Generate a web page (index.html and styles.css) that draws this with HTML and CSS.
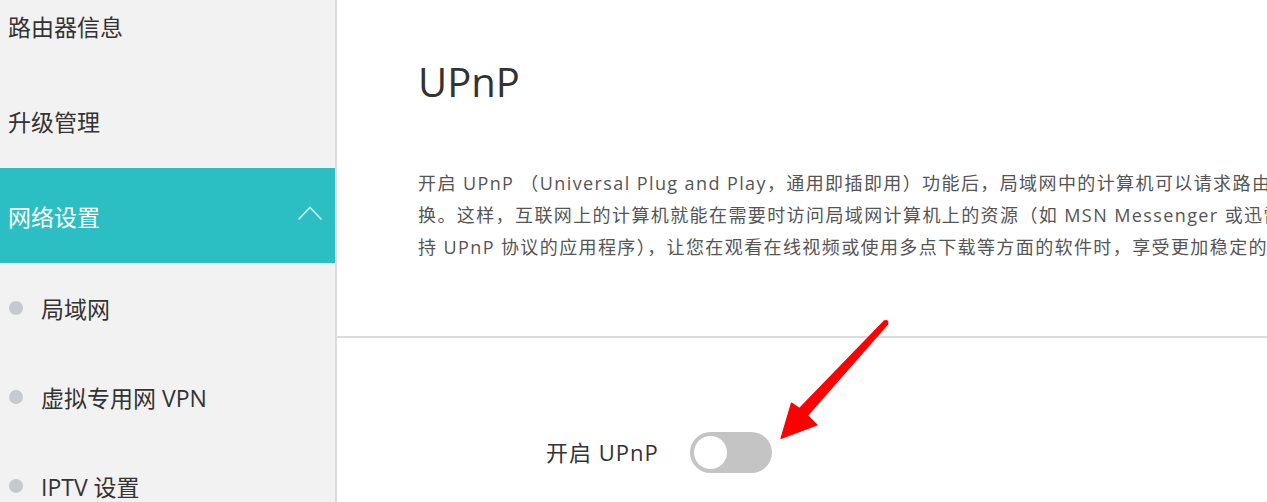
FILE: index.html
```html
<!DOCTYPE html>
<html lang="zh-CN">
<head>
<meta charset="utf-8">
<title>UPnP</title>
<link rel="stylesheet" href="styles.css">
</head>
<body>
<div class="app">
  <aside class="sidebar">
    <nav class="nav">
      <div class="nav-item">路由器信息</div>
      <div class="nav-item">升级管理</div>
      <div class="nav-item active">
        <span>网络设置</span>
        <svg class="chevron" width="26" height="16" viewBox="0 0 26 16"><path d="M1.5 14.5 L13 2.5 L24.5 14.5" fill="none" stroke="#ffffff" stroke-opacity="0.75" stroke-width="1.6"/></svg>
      </div>
      <div class="sub-list">
        <div class="sub-item"><span class="dot"></span><span>局域网</span></div>
        <div class="sub-item"><span class="dot"></span><span>虚拟专用网 VPN</span></div>
        <div class="sub-item"><span class="dot"></span><span>IPTV 设置</span></div>
      </div>
    </nav>
  </aside>
  <main class="main">
    <section class="intro">
      <h1 class="title">UPnP</h1>
      <div class="desc-clip">
        <p class="desc">
          <span class="line">开启 UPnP （Universal Plug and Play，通用即插即用）功能后，局域网中的计算机可以请求路由器自动进行端口转</span>
          <span class="line">换。这样，互联网上的计算机就能在需要时访问局域网计算机上的资源（如 MSN Messenger 或迅雷、BT、PPLive 等支</span>
          <span class="line">持 UPnP 协议的应用程序），让您在观看在线视频或使用多点下载等方面的软件时，享受更加稳定的网络。</span>
        </p>
      </div>
    </section>
    <section class="form">
      <div class="form-row">
        <span class="label">开启 UPnP</span>
        <span class="toggle"><span class="knob"></span></span>
      </div>
    </section>
  </main>
</div>
<svg class="arrow" width="1267" height="502" viewBox="0 0 1267 502">
  <polygon points="884.3,320.8 887.7,324.2 807.5,415.5 817,425 781,438.5 791.5,403 799.5,408.5" fill="#ff0000" stroke="#ff0000" stroke-width="1.2" stroke-linejoin="round"/>
  <circle cx="886" cy="322.5" r="2.4" fill="#ff0000"/>
</svg>
</body>
</html>
```

FILE: styles.css
```css
html, body {
  margin: 0;
  padding: 0;
  width: 1267px;
  height: 502px;
  overflow: hidden;
  background: #ffffff;
  font-family: "Open Sans", "Noto Sans CJK SC", sans-serif;
}

.app {
  display: flex;
  height: 502px;
}

.sidebar {
  width: 335px;
  flex: none;
  background: #f2f2f2;
  border-right: 2px solid #dcdcdc;
  overflow: hidden;
}

.nav {
  margin-top: -22px;
  display: flex;
  flex-direction: column;
}

.nav-item {
  height: 95px;
  display: flex;
  align-items: center;
  justify-content: space-between;
  padding: 0 12px 0 8px;
  font-size: 23px;
  color: #333333;
}

.nav-item.active {
  background: #2bbfc4;
  color: #ffffff;
}

.chevron {
  display: block;
  margin-top: -6px;
}

.sub-list {
  display: flex;
  flex-direction: column;
}

.sub-item {
  height: 89px;
  display: flex;
  align-items: center;
  gap: 18px;
  padding-left: 9px;
  font-size: 23px;
  color: #333333;
}

.dot {
  width: 14px;
  height: 14px;
  border-radius: 50%;
  background: #c6c9cd;
  flex: none;
}

.main {
  flex: 1;
  min-width: 0;
  display: flex;
  flex-direction: column;
  overflow: hidden;
}

.intro {
  height: 338px;
  box-sizing: border-box;
  border-bottom: 2px solid #dcdcdc;
  padding: 57px 0 0 81px;
}

.title {
  margin: 0;
  font-size: 40px;
  font-weight: 400;
  line-height: 50px;
  color: #333333;
}

.desc-clip {
  overflow: hidden;
  margin-top: 60px;
}

.desc {
  margin: 0;
  font-size: 18px;
  letter-spacing: 1.4px;
  line-height: 32px;
  color: #555555;
}

.line {
  display: block;
  white-space: nowrap;
}

.form {
  padding: 94px 0 0 209px;
}

.form-row {
  display: flex;
  align-items: center;
  gap: 31px;
}

.label {
  font-size: 22px;
  line-height: 41px;
  color: #333333;
  letter-spacing: 1px;
}

.toggle {
  width: 82px;
  height: 41px;
  border-radius: 21px;
  background: #c4c4c4;
  box-sizing: border-box;
  padding: 4px;
  display: flex;
  align-items: center;
}

.knob {
  width: 33px;
  height: 33px;
  border-radius: 50%;
  background: #ffffff;
}

.arrow {
  position: absolute;
  left: 0;
  top: 0;
  pointer-events: none;
}
```
